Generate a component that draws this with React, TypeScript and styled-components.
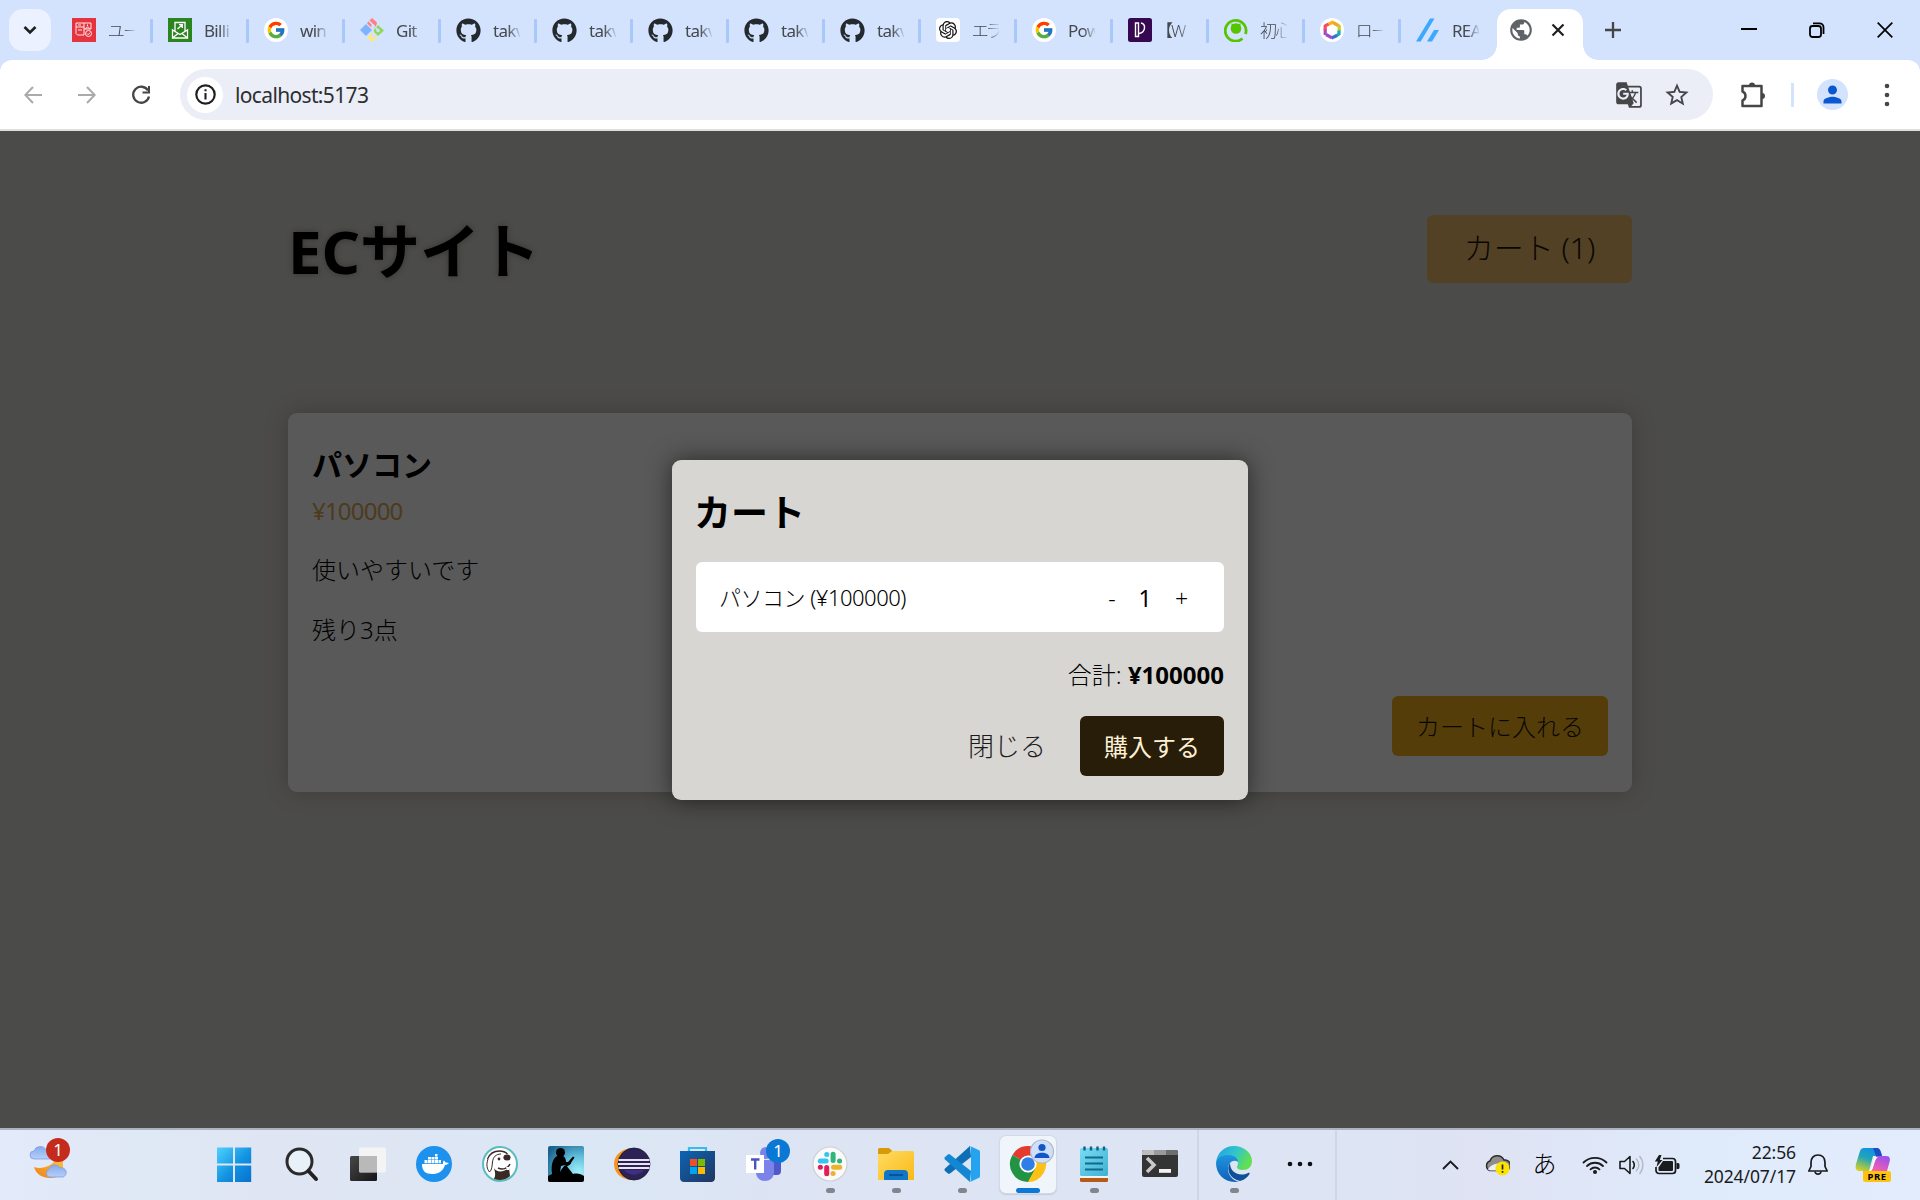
import React from "react";
import styled, { createGlobalStyle, css } from "styled-components";
import { FaGithub } from "react-icons/fa";
import { FcGoogle } from "react-icons/fc";
import { SiOpenai } from "react-icons/si";
import { MdGTranslate, MdStarBorder, MdPublic, MdPerson } from "react-icons/md";

const latin = `"Noto Sans", "Open Sans", "Noto Sans CJK JP", sans-serif`;

const GlobalStyle = createGlobalStyle`
  *, *::before, *::after { box-sizing: border-box; }
  body { margin: 0; overflow: hidden; font-family: ${latin}; color: #000; }
  svg { display: block; flex: none; }
  button { border: 0; padding: 0; background: none; font: inherit; color: inherit; letter-spacing: inherit; }
`;

const Window = styled.div`
  width: 1920px;
  height: 1200px;
  display: flex;
  flex-direction: column;
  background: #d3e2fd;
`;

/* ---------- tab strip ---------- */

const TabStrip = styled.div`
  height: 60px;
  flex: none;
  display: flex;
  padding-left: 9px;
`;

const TabSearch = styled.button`
  width: 42px;
  height: 42px;
  margin: 9px 6px 0 0;
  border-radius: 14px;
  background: #ebf1fe;
  display: grid;
  place-items: center;
`;

const Tab = styled.div<{ $last?: boolean }>`
  width: 96px;
  height: 60px;
  padding-left: 15px;
  display: flex;
  align-items: center;
  ${(p) =>
    !p.$last &&
    css`
      &::after {
        content: "";
        width: 3px;
        height: 24px;
        margin-left: auto;
        margin-top: 2px;
        border-radius: 1px;
        background: #a8c7fa;
      }
    `}
`;

const TabTitle = styled.span<{ $cjk?: boolean }>`
  width: 27px;
  margin-left: 12px;
  margin-top: 2px;
  overflow: hidden;
  white-space: nowrap;
  font-size: 17px;
  line-height: 24px;
  font-weight: ${(p) => (p.$cjk ? 300 : 400)};
  font-feature-settings: ${(p) => (p.$cjk ? '"palt"' : "normal")};
  letter-spacing: ${(p) => (p.$cjk ? "-1.4px" : "-0.7px")};
  color: #45484c;
  mask-image: linear-gradient(90deg, #000 55%, transparent 106%);
`;

const ActiveTab = styled.div`
  position: relative;
  width: 86px;
  height: 51px;
  margin-top: 9px;
  padding: 0 18px 9px 11px;
  border-radius: 14px 14px 0 0;
  background: #fff;
  display: flex;
  align-items: center;
  justify-content: space-between;
  &::before,
  &::after {
    content: "";
    position: absolute;
    bottom: 0;
    width: 15px;
    height: 15px;
  }
  &::before {
    left: -15px;
    background: radial-gradient(circle at 0 0, transparent 14.5px, #fff 15px);
  }
  &::after {
    right: -15px;
    background: radial-gradient(circle at 100% 0, transparent 14.5px, #fff 15px);
  }
`;

const NewTab = styled.button`
  width: 42px;
  height: 60px;
  margin-left: 9px;
  display: grid;
  place-items: center;
`;

const WindowControls = styled.div`
  margin-left: auto;
  margin-right: 1px;
  display: grid;
  grid-template-columns: repeat(3, 68px);
  height: 60px;
  place-items: center;
`;

/* ---------- toolbar ---------- */

const Toolbar = styled.div`
  height: 71px;
  flex: none;
  display: flex;
  align-items: center;
  padding: 0 10px 0 12px;
  background: #fff;
  border-bottom: 2px solid #dedede;
  border-radius: 12px 12px 0 0;
`;

const NavButton = styled.button<{ $w: number; $ml?: number }>`
  flex: none;
  width: ${(p) => p.$w}px;
  margin-left: ${(p) => p.$ml ?? 0}px;
  height: 48px;
  display: grid;
  place-items: center;
`;

const Omnibox = styled.div`
  flex: none;
  width: 1533px;
  height: 51px;
  margin-left: 18px;
  padding: 0 22px 0 7px;
  border-radius: 26px;
  background: #ebeef7;
  display: flex;
  align-items: center;
`;

const SiteInfo = styled.span`
  width: 36px;
  height: 36px;
  border-radius: 50%;
  background: #fff;
  display: grid;
  place-items: center;
`;

const Address = styled.span`
  margin-left: 12px;
  flex: 1;
  font-size: 21px;
  line-height: 30px;
  letter-spacing: -0.65px;
  color: #2c2e31;
`;

const OmniboxIcons = styled.div`
  display: flex;
  gap: 20px;
  color: #444648;
`;

const ToolbarDivider = styled.span`
  flex: none;
  width: 3px;
  height: 24px;
  margin: 0 23px 0 10px;
  background: #d3e3fd;
`;

const Avatar = styled.span`
  flex: none;
  width: 31px;
  height: 31px;
  border-radius: 50%;
  background: #d3e3fd;
  color: #0b57d0;
  display: grid;
  place-items: center;
`;

/* ---------- shop page ---------- */

const Page = styled.main`
  position: relative;
  flex: 1;
  background: #d8d6d2;
`;

const Shop = styled.div`
  width: 1344px;
  margin: 0 auto;
  padding-top: 84px;
`;

const ShopHeader = styled.header`
  display: flex;
  justify-content: space-between;
  align-items: flex-start;
  height: 198px;
`;

const SiteTitle = styled.h1`
  margin: 0;
  font-size: 60px;
  line-height: 72px;
  letter-spacing: 0;
  font-weight: 700;
  text-shadow: 0 0 6px rgba(0, 0, 0, 0.3);
`;

const OpenCart = styled.button`
  width: 205px;
  height: 68px;
  border-radius: 6px;
  background: #edba6a;
  font-size: 30px;
  line-height: 40px;
  padding: 0 0 2px;
  font-weight: 300;
  color: #1c1408;
`;

const Product = styled.article`
  height: 379px;
  padding: 32px 24px 36px;
  border-radius: 9px;
  background: #fff;
  box-shadow: 0 0 24px rgba(0, 0, 0, 0.2);
  display: flex;
  flex-direction: column;
`;

const ProductName = styled.h2`
  margin: 0;
  font-size: 30px;
  line-height: 40px;
  font-weight: 700;
`;

const Price = styled.p`
  margin: 8px 0 0;
  font-size: 24px;
  line-height: 36px;
  letter-spacing: -0.8px;
  color: #dba75a;
`;

const Note = styled.p<{ $first?: boolean }>`
  margin: ${(p) => (p.$first ? 23 : 24)}px 0 0;
  font-size: 24px;
  line-height: 36px;
  font-weight: 300;
`;

const AddButton = styled.button`
  width: 216px;
  height: 60px;
  margin: auto 0 0 auto;
  padding-bottom: 2px;
  border-radius: 6px;
  background: #f0ae1a;
  font-size: 24px;
  font-weight: 300;
  color: #1c1408;
`;

const Overlay = styled.div`
  position: absolute;
  inset: 0;
  display: grid;
  place-items: center;
  background: rgba(0, 0, 0, 0.65);
`;

const Modal = styled.section`
  width: 576px;
  height: 340px;
  border-radius: 9px;
  padding: 24px;
  background: #d8d6d2;
  box-shadow: 0 0 24px rgba(0, 0, 0, 0.55);
  display: flex;
  flex-direction: column;
`;

const ModalTitle = styled.h2`
  margin: 5px 0 25px -2px;
  font-size: 37px;
  line-height: 48px;
  font-weight: 700;
`;

const CartItem = styled.div`
  height: 70px;
  padding: 0 24px;
  border-radius: 6px;
  background: #fff;
  display: flex;
  align-items: center;
  justify-content: space-between;
  font-size: 22px;
  line-height: 34px;
  font-weight: 300;
`;

const ItemName = styled.span`
  margin-left: -1px;
  letter-spacing: -0.5px;
`;

const Quantity = styled.div`
  display: grid;
  grid-template-columns: 30px 36px 37px;
  place-items: center;
  font-size: 23px;
  font-weight: 400;
  padding-top: 2px;
`;

const Step = styled.button`
  font-size: 23px;
  font-weight: 300;
`;

const Total = styled.p`
  margin: 25px 0 0;
  text-align: right;
  font-size: 24px;
  line-height: 36px;
  font-weight: 300;
  strong {
    font-weight: 700;
    letter-spacing: 0;
  }
`;

const Actions = styled.div`
  margin-top: 23px;
  display: flex;
  justify-content: flex-end;
`;

const CloseButton = styled.button`
  width: 146px;
  height: 60px;
  padding-bottom: 2px;
  font-size: 26px;
  font-weight: 300;
  color: #1b1b1b;
`;

const BuyButton = styled.button`
  width: 144px;
  height: 60px;
  border-radius: 6px;
  background: #271d08;
  color: #fdf0d6;
  font-size: 24px;
`;

/* ---------- taskbar ---------- */

const Taskbar = styled.footer`
  height: 72px;
  flex: none;
  display: flex;
  border-top: 2px solid #acb3c0;
  background: linear-gradient(90deg, #e3eafa 0%, #dfe8f5 8%, #e0e5f3 14%, #dbe7f5 30%, #dde4f3 42%, #dde4f3 72%, #dfe3f4 77%, #dfeafa 88%, #e2ecfc 100%);
`;

const Weather = styled.div`
  position: relative;
  width: 203px;
  padding: 11px 0 0 26px;
`;

const Badge = styled.span<{ $x: number; $y: number; $bg: string }>`
  position: absolute;
  left: ${(p) => p.$x}px;
  top: ${(p) => p.$y}px;
  width: 24px;
  height: 24px;
  border-radius: 50%;
  background: ${(p) => p.$bg};
  color: #fff;
  font-size: 17px;
  line-height: 24px;
  text-align: center;
`;

const AppCell = styled.div<{ $active?: boolean }>`
  position: relative;
  width: ${(p) => (p.$active ? 56 : 66)}px;
  height: ${(p) => (p.$active ? 57 : 70)}px;
  margin: ${(p) => (p.$active ? "6px 5px 0" : "0")};
  padding-top: ${(p) => (p.$active ? 10 : 16)}px;
  display: flex;
  flex: none;
  flex-direction: column;
  align-items: center;
  gap: 6px;
  ${(p) =>
    p.$active &&
    css`
      background: #f0f4fb;
      border-radius: 6px;
      box-shadow: 0 0 0 1px #d3d9e7, 0 1px 1px 1px #c5ccdb;
    `}
`;

const Running = styled.span<{ $active?: boolean }>`
  width: ${(p) => (p.$active ? 24 : 9)}px;
  height: 5px;
  border-radius: 3px;
  background: ${(p) => (p.$active ? "#0a78d4" : "#81858d")};
`;

const RecentGroup = styled.div`
  display: flex;
  width: 140px;
  margin-left: 4px;
  padding-left: 2px;
  border-left: 2px solid #d0d6e6;
  border-right: 2px solid #d0d6e6;
`;

const Tray = styled.div`
  margin-left: 89px;
  display: flex;
  align-items: center;
`;

const TrayCell = styled.div<{ $w: number; $ml?: number }>`
  width: ${(p) => p.$w}px;
  margin-left: ${(p) => p.$ml ?? 0}px;
  display: grid;
  place-items: center;
`;

const InputMode = styled.span`
  font-size: 24px;
  line-height: 30px;
  font-weight: 300;
  margin-top: -2px;
`;

const Clock = styled.div`
  width: 111px;
  margin-top: -3px;
  text-align: right;
  font-size: 17.5px;
  line-height: 24px;
  letter-spacing: -0.1px;
  color: #1a1b1d;
  white-space: nowrap;
`;

/* ---------- favicons ---------- */

const Fav = (p: { children: React.ReactNode }) => (
  <svg width="24" height="24" viewBox="0 0 24 24">{p.children}</svg>
);

const UserFav = () => (
  <Fav>
    <rect width="24" height="24" fill="#e5343d" />
    <g fill="none" stroke="#fff" strokeWidth="0.900">
      <path d="M4 5h8v12H5.500L4 15.500zM4 9h8M6 12h4M6 7h3" />
      <path d="M12 5h7v6h-7M15.500 6.500v1.500M13.800 11c0-2.500 3.600-2.500 3.600 0" />
      <circle cx="16.500" cy="15.500" r="3" />
      <path d="M15 15.500l1.200 1.200 2-2.200" />
    </g>
  </Fav>
);

const BillingFav = () => (
  <Fav>
    <rect width="24" height="24" fill="#2c8420" />
    <g fill="none" stroke="#fff" strokeWidth="1.300">
      <path d="M4.500 12v8h15v-8l-7.500 4.500z" />
      <path d="M7 13V4.500h10V13M4.500 20l5.500-4.500M19.500 20L14 15.500" />
      <path d="M9.500 11l4.500-4M11 6.700h3.300V10" />
    </g>
  </Fav>
);

const GoogleFav = () => (
  <Fav>
    <circle cx="12" cy="12" r="12" fill="#fff" />
    <FcGoogle x={2} y={2} size={20} />
  </Fav>
);

const GitFav = () => (
  <Fav>
    <path d="M12 0l5 4.500-1.500 6L9.500 8 7 5z" fill="#ff8080" />
    <path d="M6 6l6 6-6 6-6-6z" fill="#80b3ff" />
    <path d="M18 7l6 5.500-6 5.500-5-5z" fill="#8fd858" />
    <path d="M12 14.500l5 5-5 4.500-5-4.500z" fill="#ffe680" />
    <path d="M9 3l9 9M13 7v12" stroke="#d3e2fd" strokeWidth="1.500" fill="none" />
    <circle cx="13" cy="8" r="1.700" fill="#d3e2fd" />
    <circle cx="18" cy="12.500" r="1.700" fill="#d3e2fd" />
    <circle cx="13" cy="18" r="1.700" fill="#d3e2fd" />
  </Fav>
);

const ChatFav = () => (
  <Fav>
    <rect width="24" height="24" rx="4" fill="#fff" />
    <SiOpenai x={3} y={3} size={18} color="#111" />
  </Fav>
);

const ProgateFav = () => (
  <Fav>
    <rect width="24" height="24" rx="2.500" fill="#36084f" />
    <path d="M7.500 15.500V5h3v13.500h-3v-3M13 5c5 1 5 9-2 10.500" fill="none" stroke="#fff" strokeWidth="1.400" />
  </Fav>
);

const QiitaFav = () => (
  <Fav>
    <path d="M18.500 20.500A10.400 10.400 0 1 1 21.500 16" fill="none" stroke="#55c500" strokeWidth="2.800" />
    <circle cx="12" cy="10.500" r="5.300" fill="#55c500" />
    <path d="M7.500 8.500V5.500l3 1M16.500 8.500V5.500l-3 1" fill="#55c500" />
  </Fav>
);

const HexFav = () => (
  <Fav>
    <circle cx="12" cy="12" r="12" fill="#fff" />
    <g fill="none" strokeWidth="3.200">
      <path d="M8 6.500L13.500 3.800" stroke="#fbb01e" />
      <path d="M13 4.500l6 3.500" stroke="#f5a524" />
      <path d="M19.200 7v6" stroke="#c3cf21" />
      <path d="M19 12.500v3.500l-3 2" stroke="#1ba9b5" />
      <path d="M17 17.500L11.500 20" stroke="#3d6fd1" />
      <path d="M12 19.800L6 16.500" stroke="#9b4dca" />
      <path d="M5.200 17v-6" stroke="#b044c0" />
      <path d="M5.200 12V8L8.500 6" stroke="#f04e5e" />
    </g>
  </Fav>
);

const ZennFav = () => (
  <Fav>
    <path d="M0 23.500h4.700L18.500.500h-4.500z" fill="#3ea8ff" />
    <path d="M11 23.500h5L23 12h-5z" fill="#3ea8ff" />
  </Fav>
);

const GithubFav = () => <FaGithub size={25} color="#24292e" />;

/* ---------- taskbar icons ---------- */

const Ico = (p: { children: React.ReactNode }) => (
  <svg width="36" height="36" viewBox="0 0 36 36" overflow="visible">
    {p.children}
  </svg>
);

const WeatherIcon = () => (
  <svg width="44" height="44" viewBox="0 0 44 44">
    <defs>
      <linearGradient id="moon" x1="1" y1="0" x2="0" y2="1">
        <stop offset="0" stopColor="#f6c344" />
        <stop offset="1" stopColor="#f07f1a" />
      </linearGradient>
      <linearGradient id="cloud" x1="0" y1="0" x2="0" y2="1">
        <stop offset="0" stopColor="#86a9ec" />
        <stop offset="1" stopColor="#b4cff8" />
      </linearGradient>
    </defs>
    <path d="M8 26c8 3 18-1 22-8h7v8c0 8-6 11-13 11-8 0-14-4-16-11z" fill="url(#moon)" />
    <path d="M8 18a4 4 0 0 1 0-8 6.500 6.500 0 0 1 12-1 5 5 0 0 1 4 9z" fill="url(#cloud)" stroke="#7ba0e4" strokeWidth=".8" />
    <path d="M23 36a4 4 0 0 1 0-7.500 6 6 0 0 1 11-1.500 4.500 4.500 0 0 1 3 9z" fill="url(#cloud)" stroke="#7ba0e4" strokeWidth=".8" />
  </svg>
);

const WindowsIcon = () => (
  <Ico>
    <defs>
      <linearGradient id="win" x1="0" y1="0" x2="1" y2="1">
        <stop offset="0" stopColor="#4fd2ff" />
        <stop offset=".55" stopColor="#1292e0" />
        <stop offset="1" stopColor="#0672cf" />
      </linearGradient>
    </defs>
    <path d="M0 1.500h16v16h-16zM18 1.500h16.200v16H18zM0 19.500h16v16.500H0zM18 19.500h16.200v16.500H18z" transform="translate(-1 0)" fill="url(#win)" />
  </Ico>
);

const SearchIcon = () => (
  <Ico>
    <circle cx="15.500" cy="15.500" r="12.500" fill="#e8f0f8" stroke="#2b2b2b" strokeWidth="3" />
    <path d="M24.500 25l7.500 8" stroke="#222" strokeWidth="4" strokeLinecap="round" />
  </Ico>
);

const TaskViewIcon = () => (
  <Ico>
    <defs>
      <linearGradient id="tv" x1="0" y1="0" x2="1" y2="1">
        <stop offset="0" stopColor="#474747" />
        <stop offset="1" stopColor="#161616" />
      </linearGradient>
    </defs>
    <rect x="0" y="10" width="27" height="25" rx="1.500" fill="url(#tv)" />
    <rect x="9" y="1.500" width="27" height="25" rx="1.500" fill="#f4f4f4" />
    <rect x="9" y="10" width="18" height="16" fill="#b9b9b9" />
  </Ico>
);

const DockerIcon = () => (
  <Ico>
    <circle cx="18" cy="18" r="18" fill="#1d91ee" />
    <path d="M6 18h21c0-1.500 0-2.500.800-3.500 1 .500 1.500 1.200 1.700 2 1.200-.200 2.300 0 3.300.600-.800 1.300-2 1.900-3.800 1.800C27 25.500 22 28 16 28 9.500 28 6 25 6 18z" fill="#fff" />
    <path d="M8.500 14h3v3.200h-3zM12 14h3v3.200h-3zM15.500 14h3v3.200h-3zM19 14h3v3.200h-3zM22.500 14h2.500v3.200h-2.500zM12 11h3v2.500h-3zM15.500 11h3v2.500h-3zM19 11h3v2.500h-3zM19 8h2.500v2.500H19z" fill="#fff" />
  </Ico>
);

const BeaverIcon = () => (
  <Ico>
    <circle cx="18" cy="18" r="17" fill="#fff" stroke="#59bcc0" strokeWidth="2" />
    <path d="M12 33c2-4 1-7 0-11 2 4 9 5 15 0l1 8c-4 4-10 5-16 3z" fill="#3a2a26" />
    <path d="M5.500 13c2-5 6-8 12-8 4 0 6 1 8 3" fill="none" stroke="#3a2a26" strokeWidth="1.300" />
    <path d="M6 13c-2 6-1 10 1.500 13 2.500-2 2.500-6 3-10 .500-5 3.500-8 8.500-8" fill="none" stroke="#3a2a26" strokeWidth="1" />
    <ellipse cx="25" cy="11.500" rx="3.600" ry="3" fill="#3a2a26" />
    <circle cx="17" cy="13" r="1.400" fill="#3a2a26" />
    <path d="M16 22c4 2 10 1 12-4" fill="none" stroke="#3a2a26" strokeWidth="1.400" />
    <path d="M24 21h3v3h-2z" fill="#fff" />
  </Ico>
);

const KindleIcon = () => (
  <Ico>
    <defs>
      <radialGradient id="kin" cx=".85" cy=".75" r="1">
        <stop offset="0" stopColor="#a4f3fb" />
        <stop offset=".5" stopColor="#5cb9d8" />
        <stop offset="1" stopColor="#1a628c" />
      </radialGradient>
    </defs>
    <rect width="36" height="36" rx="2" fill="url(#kin)" />
    <circle cx="12.500" cy="6.500" r="4.500" fill="#000" />
    <path d="M9 10c-5 3-6 10-5 18l-4 2v4a2 2 0 0 0 2 2h32a2 2 0 0 0 2-2v-4c-3-2-6-3-11-2l-7-9-6 7 1-6 4-1 6-1-1-2-4 0c0-4-2-7-7-7z" fill="#000" />
    <path d="M17 19l4-4 4-4.500 1.500 1-5 7.500-3 1.500z" fill="#000" />
    <path d="M13 24l4-5 4 8h-9z" fill="#000" />
  </Ico>
);

const EclipseIcon = () => (
  <Ico>
    <path d="M18 2C6 3 0 10 0 18s6 15 17 16C8 29 5 24 5 18S9 6 18 2z" fill="#f7941e" />
    <circle cx="20" cy="18" r="16" fill="#2c2255" stroke="#18132f" strokeWidth=".8" />
    <path d="M10 24a11 8 0 0 0 20 0z" fill="#3f2f80" />
    <path d="M4.500 14h31M4 18h32M4.500 22h31" stroke="#e8e4f2" strokeWidth="2" />
  </Ico>
);

const StoreIcon = () => (
  <Ico>
    <defs>
      <linearGradient id="store" x1="0" y1="0" x2="1" y2="1">
        <stop offset="0" stopColor="#0b65b5" />
        <stop offset="1" stopColor="#22355f" />
      </linearGradient>
    </defs>
    <path d="M9 8V2h17v6" fill="none" stroke="#35bdf0" strokeWidth="2.200" />
    <path d="M0 5h35v26.500a4 4 0 0 1-4 4.500h-27a4 4 0 0 1-4-4.500z" fill="url(#store)" />
    <rect x="10" y="13" width="7" height="7" fill="#f25022" />
    <rect x="18" y="13" width="7" height="7" fill="#7fba00" />
    <rect x="10" y="21" width="7" height="7" fill="#00a4ef" />
    <rect x="18" y="21" width="7" height="7" fill="#ffb900" />
  </Ico>
);

const TeamsIcon = () => (
  <Ico>
    <circle cx="20" cy="7" r="6" fill="#7b83eb" />
    <rect x="24" y="13" width="11" height="16" rx="4" fill="#5059c9" />
    <path d="M10 14h18v12c0 12-18 12-18 0z" fill="#7b83eb" />
    <rect x="0" y="9" width="18" height="18" fill="#fff" />
    <path d="M5 13.500h8.500M9.200 13.500v10" stroke="#4b53bc" strokeWidth="2.400" />
  </Ico>
);

const SlackIcon = () => (
  <Ico>
    <circle cx="18" cy="18" r="17" fill="#fafafa" stroke="#cfd0d6" strokeWidth="1.200" />
    <g strokeWidth="5" strokeLinecap="round">
      <path d="M8.300 14.900h5.800M14.700 8.500h.100" stroke="#36c5f0" />
      <path d="M21.100 8.300v6.200M27.500 14.900h.100" stroke="#2eb67d" />
      <path d="M27.700 21.300h-6.200M21.100 27.600h-.100" stroke="#ecb22e" />
      <path d="M14.700 21.500v6.200M8.300 21.300h.100" stroke="#e01e5a" />
    </g>
  </Ico>
);

const ExplorerIcon = () => (
  <Ico>
    <defs>
      <linearGradient id="fold" x1="0" y1="0" x2="1" y2="1">
        <stop offset="0" stopColor="#ffdc63" />
        <stop offset="1" stopColor="#f9b916" />
      </linearGradient>
    </defs>
    <path d="M0 3.500a1.500 1.500 0 0 1 1.500-1.500H11l4 3.500L11 9H0z" fill="#d99a08" />
    <path d="M0 8h10l4-3h20.500A1.500 1.500 0 0 1 36 6.500V34H0z" fill="url(#fold)" />
    <path d="M6 34V28a4 4 0 0 1 4-4h16a4 4 0 0 1 4 4v6z" fill="#0f76c8" />
    <path d="M11 29h14" stroke="#0b4f90" strokeWidth="1.800" />
  </Ico>
);

const CodeIcon = () => (
  <Ico>
    <path d="M26 0L1 22.500c-.800 1-.700 1.700 0 2.400l3 2.500c.700.400 1.300.400 2 0L27 11z" fill="#0d6fb5" />
    <path d="M26 36L1 13.500c-.800-1-.700-1.700 0-2.400l3-2.500c.700-.400 1.300-.400 2 0L27 25z" fill="#1387d3" />
    <path d="M26 0l9 4.300c.700.400 1 .800 1 1.700v24c0 .900-.300 1.300-1 1.700L26 36c.700-.700 1-1.500 1-2.500v-31C27 1.500 26.700.700 26 0z" fill="#26a3ee" />
  </Ico>
);

const ChromeIcon = () => (
  <Ico>
    <path d="M18 18L2.400 9A18 18 0 0 1 33.600 9z" fill="#e33b2e" />
    <path d="M18 18L33.600 9A18 18 0 0 1 18 36z" fill="#fbc116" />
    <path d="M18 18v18A18 18 0 0 1 2.400 9z" fill="#229342" />
    <path d="M18 9.500h15.800L34 10 25.500 22.500z" fill="#fbc116" />
    <path d="M25.500 22.200L18 36l-3-5 4-5z" fill="#229342" />
    <path d="M25.800 22.500L18 36h2l8-14z" fill="#fbc116" />
    <circle cx="18" cy="18" r="8.600" fill="#fff" />
    <circle cx="18" cy="18" r="6.800" fill="#2f7de9" />
    <circle cx="32" cy="5.500" r="11.500" fill="#cfdffb" stroke="#b0b8c8" strokeWidth="1.200" />
    <circle cx="32" cy="1.500" r="3.600" fill="#1155c8" />
    <path d="M24.500 12c0-7 15-7 15 0z" fill="#1155c8" />
  </Ico>
);

const NotepadIcon = () => (
  <Ico>
    <defs>
      <linearGradient id="note" x1="0" y1="0" x2="1" y2="1">
        <stop offset="0" stopColor="#7adcf3" />
        <stop offset="1" stopColor="#3fb0d2" />
      </linearGradient>
    </defs>
    <rect x="4" y="30" width="28" height="6" rx="1.500" fill="#b85a17" />
    <rect x="4" y="29" width="28" height="3" fill="#f3f3f3" />
    <rect x="4" y="2" width="28" height="28" rx="1.500" fill="url(#note)" />
    <path d="M8.500.500v4M15 .500v4M21.500.500v4M28 .500v4" stroke="#106084" strokeWidth="2.400" />
    <path d="M9 11.500h18M9 17.500h18M9 23.500h18" stroke="#106a8e" strokeWidth="2" />
  </Ico>
);

const TerminalIcon = () => (
  <Ico>
    <rect x="0" y="4" width="36" height="27" rx="2" fill="#343434" />
    <path d="M0 9V6a2 2 0 0 1 2-2h10v5z" fill="#bdbdbd" />
    <path d="M12 4h12v5H12z" fill="#9a9a9a" />
    <path d="M24 4h10a2 2 0 0 1 2 2v3H24z" fill="#6d6d6d" />
    <path d="M5 12l7 7-7 7" fill="none" stroke="#c9c9c9" strokeWidth="3.500" />
    <rect x="17" y="23" width="12" height="3.800" fill="#f2f2f2" />
  </Ico>
);

const EdgeIcon = () => (
  <Ico>
    <defs>
      <linearGradient id="edA" x1="0" y1="0" x2="1" y2=".4">
        <stop offset="0" stopColor="#1f9fe0" />
        <stop offset=".55" stopColor="#30c4cf" />
        <stop offset="1" stopColor="#62e052" />
      </linearGradient>
      <linearGradient id="edB" x1="0" y1="0" x2="0" y2="1">
        <stop offset="0" stopColor="#1f95e0" />
        <stop offset="1" stopColor="#0f60b8" />
      </linearGradient>
    </defs>
    <path d="M0 17C1 6 9 0 18 0c10 0 18 7 18 15 0 6-4 9-9 9-4 0-6-1-6-3 0-1 1-1.500 1-4 0-3-3-5-7-5C8 12 1 13 0 17z" fill="url(#edA)" />
    <path d="M0 17c1-6 7-8 12-8 6 0 10 3 10 7-4-3-10 0-10 7 0 6 5 12 11 12.500C10 38 0 29 0 17z" fill="url(#edB)" />
    <path d="M14 17c-4 5-1 16 10 18 4-1 8-4 9.500-7 .500-1-.500-1.500-1.500-1-8 4-18 0-18-10z" fill="#0e4f98" />
  </Ico>
);

const DotsIcon = () => (
  <Ico>
    <circle cx="8" cy="18" r="2.300" fill="#111" />
    <circle cx="18" cy="18" r="2.300" fill="#111" />
    <circle cx="28" cy="18" r="2.300" fill="#111" />
  </Ico>
);

/* ---------- tray icons ---------- */

const CloudAlert = () => (
  <svg width="26" height="22" viewBox="0 0 26 22">
    <path d="M6 16.500a5 5 0 0 1 0-9.500 7.500 7.500 0 0 1 14-1 5 5 0 0 1 2 10.500z" fill="#8e8e8e" stroke="#2c2c2c" strokeWidth="1.500" />
    <path d="M4 15.500c2-4 8-7 13-5l-4 6H6z" fill="#eceff4" />
    <circle cx="18.500" cy="14.500" r="7" fill="#fde300" />
    <path d="M18.500 10.500v5M18.500 17v1.800" stroke="#222" strokeWidth="1.700" />
  </svg>
);

const WifiIcon = () => (
  <svg width="26" height="20" viewBox="0 0 26 20">
    <g fill="none" stroke="#1a1b1d" strokeWidth="1.800" strokeLinecap="round">
      <path d="M1.500 7.500a16.500 16.500 0 0 1 23 0M5 11a11.500 11.500 0 0 1 16 0M8.500 14.300a6.500 6.500 0 0 1 9 0" />
    </g>
    <circle cx="13" cy="17" r="2" fill="#1a1b1d" />
  </svg>
);

const SpeakerIcon = () => (
  <svg width="26" height="22" viewBox="0 0 26 22">
    <path d="M2 7.500h4.500L12 2.500v17l-5.500-5H2z" fill="none" stroke="#1a1b1d" strokeWidth="1.600" strokeLinejoin="round" />
    <path d="M15 7.500c1.500 2 1.500 5 0 7" fill="none" stroke="#1a1b1d" strokeWidth="1.600" strokeLinecap="round" />
    <path d="M18 4.500c3.500 4 3.500 9 0 13M21.500 2c4.500 5.500 4.500 12.500 0 18" fill="none" stroke="#b4bbc6" strokeWidth="1.400" />
  </svg>
);

const BatteryIcon = () => (
  <svg width="26" height="20" viewBox="0 0 26 20">
    <path d="M9 3.500h9.500a3 3 0 0 1 3 3v9a3 3 0 0 1-3 3H5a3 3 0 0 1-3-3V12" fill="none" stroke="#1a1b1d" strokeWidth="1.700" />
    <path d="M9 6h9a1 1 0 0 1 1 1v8a1 1 0 0 1-1 1H5.500a1 1 0 0 1-1-1v-2.500z" fill="#1a1b1d" />
    <path d="M22.500 8h1.500a1.500 1.500 0 0 1 1.500 1.500v3a1.500 1.500 0 0 1-1.500 1.500h-1.500z" fill="#1a1b1d" />
    <path d="M5 0L.800 6.500h3L2.500 12 8.500 5H5.800L7.500 0z" fill="#1a1b1d" />
  </svg>
);

const BellIcon = () => (
  <svg width="22" height="24" viewBox="0 0 22 24">
    <path d="M11 2c-4.500 0-7 3.300-7 7.500v4L1.800 18h18.400L18 13.500v-4C18 5.300 15.500 2 11 2z" fill="none" stroke="#1a1b1d" strokeWidth="1.700" strokeLinejoin="round" />
    <path d="M8 18.500c.500 3.500 5.500 3.500 6 0" fill="none" stroke="#1a1b1d" strokeWidth="1.700" />
  </svg>
);

const PreTag = styled.span`
  position: absolute;
  left: 8px;
  top: 24px;
  width: 28px;
  height: 11px;
  border-radius: 2.5px;
  background: #ffc20e;
  font-size: 9.5px;
  line-height: 11px;
  font-weight: 700;
  letter-spacing: 0.5px;
  text-align: center;
`;

const CopilotBox = styled.div`
  position: relative;
  width: 36px;
  height: 36px;
  margin: -1px 0 0 19px;
`;

const CopilotIcon = () => (
  <svg width="36" height="36" viewBox="0 0 36 36">
    <defs>
      <linearGradient id="cpA" x1=".6" y1="0" x2=".2" y2="1">
        <stop offset="0" stopColor="#128fe2" />
        <stop offset=".45" stopColor="#22a6b8" />
        <stop offset="1" stopColor="#d8d020" />
      </linearGradient>
      <linearGradient id="cpB" x1=".8" y1="0" x2=".3" y2="1">
        <stop offset="0" stopColor="#9a4ff0" />
        <stop offset=".6" stopColor="#ee5fb0" />
        <stop offset="1" stopColor="#ff9355" />
      </linearGradient>
    </defs>
    <path d="M9 1h13c3 0 4 4 5 8h-9l-4 15H5c-4 0-5-2-4-7L5 4c.800-2 2-3 4-3z" fill="url(#cpA)" />
    <path d="M18 1h4c3 0 4 4 5 8h-6z" fill="#1a4fc4" />
    <path d="M21 9h10c4 0 4.500 3 3.500 6l-2.500 9-2 7H14c-3 0-5-2-6-7h6c2 0 3-2 3.500-4z" fill="url(#cpB)" />
    <path d="M20 10c-2 3-3 13-6 14h2c3-2 3-12 7-14z" fill="#fff" />
  </svg>
);

const tabs: { icon: React.ReactNode; title: string; cjk?: boolean }[] = [
  { icon: <UserFav />, title: "ユー", cjk: true },
  { icon: <BillingFav />, title: "Billi" },
  { icon: <GoogleFav />, title: "win" },
  { icon: <GitFav />, title: "Git" },
  ...Array.from({ length: 5 }, () => ({ icon: <GithubFav />, title: "takv" })),
  { icon: <ChatFav />, title: "エラ", cjk: true },
  { icon: <GoogleFav />, title: "Pow" },
  { icon: <ProgateFav />, title: "【W", cjk: true },
  { icon: <QiitaFav />, title: "初心", cjk: true },
  { icon: <HexFav />, title: "ロー", cjk: true },
  { icon: <ZennFav />, title: "REA" },
];

const apps: { icon: React.ReactNode; running?: boolean; active?: boolean; badge?: string }[] = [
  { icon: <WindowsIcon /> },
  { icon: <SearchIcon /> },
  { icon: <TaskViewIcon /> },
  { icon: <DockerIcon /> },
  { icon: <BeaverIcon /> },
  { icon: <KindleIcon /> },
  { icon: <EclipseIcon /> },
  { icon: <StoreIcon /> },
  { icon: <TeamsIcon />, badge: "1" },
  { icon: <SlackIcon />, running: true },
  { icon: <ExplorerIcon />, running: true },
  { icon: <CodeIcon />, running: true },
  { icon: <ChromeIcon />, active: true },
  { icon: <NotepadIcon />, running: true },
  { icon: <TerminalIcon /> },
];

function BrowserTabs() {
  return (
    <TabStrip>
      <TabSearch>
        <svg width="14" height="10" viewBox="0 0 14 10">
          <path d="M1.500 2L7 7.500 12.500 2" fill="none" stroke="#1f1f1f" strokeWidth="2.600" />
        </svg>
      </TabSearch>
      {tabs.map((t, i) => (
        <Tab key={i} $last={i === tabs.length - 1}>
          {t.icon}
          <TabTitle $cjk={t.cjk}>{t.title}</TabTitle>
        </Tab>
      ))}
      <ActiveTab>
        <MdPublic size={26} color="#5f6368" />
        <svg width="14" height="14" viewBox="0 0 14 14">
          <path d="M1.500 1.500l11 11M12.500 1.500l-11 11" stroke="#1f1f1f" strokeWidth="2.200" />
        </svg>
      </ActiveTab>
      <NewTab>
        <svg width="16" height="16" viewBox="0 0 16 16">
          <path d="M8 0v16M0 8h16" stroke="#444746" strokeWidth="2.300" />
        </svg>
      </NewTab>
      <WindowControls>
        <svg width="16" height="16" viewBox="0 0 16 16">
          <path d="M0 7h16" stroke="#000" strokeWidth="2" />
        </svg>
        <svg width="16" height="16" viewBox="0 0 16 16" overflow="visible">
          <rect x="1" y="4" width="11" height="11" rx="2.500" fill="none" stroke="#000" strokeWidth="1.800" />
          <path d="M4 1.300h6.500a4 4 0 0 1 4 4V12" fill="none" stroke="#000" strokeWidth="1.800" />
        </svg>
        <svg width="16" height="16" viewBox="0 0 16 16">
          <path d="M.7.7l14.600 14.600M15.300.7L.7 15.300" stroke="#000" strokeWidth="1.700" />
        </svg>
      </WindowControls>
    </TabStrip>
  );
}

function BrowserToolbar() {
  return (
    <Toolbar>
      <NavButton $w={42}>
        <svg width="18" height="18" viewBox="0 0 18 18">
          <path d="M18 9H1.500M9 1L1.300 9 9 17" fill="none" stroke="#a9aaac" strokeWidth="2" />
        </svg>
      </NavButton>
      <NavButton $w={66}>
        <svg width="18" height="18" viewBox="0 0 18 18">
          <path d="M0 9h16.500M9 1l7.700 8L9 17" fill="none" stroke="#a9aaac" strokeWidth="2" />
        </svg>
      </NavButton>
      <NavButton $w={42}>
        <svg width="20" height="20" viewBox="0 0 20 20">
          <path d="M17 5.500A8 8 0 1 0 18 11.500" fill="none" stroke="#444746" strokeWidth="2.300" />
          <path d="M19 1v7.500h-7.500V6.500H17V1z" fill="#444746" />
        </svg>
      </NavButton>
      <Omnibox>
        <SiteInfo>
          <svg width="21" height="21" viewBox="0 0 21 21">
            <circle cx="10.500" cy="10.500" r="9.200" fill="none" stroke="#1f1f1f" strokeWidth="2.200" />
            <path d="M10.500 9v6.500M10.500 5.300v2" stroke="#1f1f1f" strokeWidth="2.100" />
          </svg>
        </SiteInfo>
        <Address>localhost:5173</Address>
        <OmniboxIcons>
          <MdGTranslate size={28} />
          <MdStarBorder size={28} />
        </OmniboxIcons>
      </Omnibox>
      <NavButton $w={56} $ml={12}>
        <svg width="24" height="26" viewBox="0 0 24 26" overflow="visible">
          <path d="M1.500 4h19v20h-19v-5.500c4-1.500 4-7.500 0-9z" fill="none" stroke="#444746" strokeWidth="2.500" strokeLinejoin="round" />
          <path d="M8 3.500a3 3 0 0 1 6 0zM21 11a3 3 0 0 1 0 6z" fill="#444746" />
        </svg>
      </NavButton>
      <ToolbarDivider />
      <Avatar>
        <MdPerson size={27} />
      </Avatar>
      <NavButton $w={46} $ml={16}>
        <svg width="6" height="26" viewBox="0 0 6 26" fill="#444746">
          <circle cx="3" cy="4" r="2.300" />
          <circle cx="3" cy="13" r="2.300" />
          <circle cx="3" cy="22" r="2.300" />
        </svg>
      </NavButton>
    </Toolbar>
  );
}

function CartModal() {
  return (
    <Overlay>
      <Modal>
        <ModalTitle>カート</ModalTitle>
        <CartItem>
          <ItemName>パソコン (¥100000)</ItemName>
          <Quantity>
            <Step>-</Step>
            <span>1</span>
            <Step>+</Step>
          </Quantity>
        </CartItem>
        <Total>
          合計: <strong>¥100000</strong>
        </Total>
        <Actions>
          <CloseButton>閉じる</CloseButton>
          <BuyButton>購入する</BuyButton>
        </Actions>
      </Modal>
    </Overlay>
  );
}

function ShopPage() {
  return (
    <Page>
      <Shop>
        <ShopHeader>
          <SiteTitle>ECサイト</SiteTitle>
          <OpenCart>カート (1)</OpenCart>
        </ShopHeader>
        <Product>
          <ProductName>パソコン</ProductName>
          <Price>¥100000</Price>
          <Note $first>使いやすいです</Note>
          <Note>残り3点</Note>
          <AddButton>カートに入れる</AddButton>
        </Product>
      </Shop>
      <CartModal />
    </Page>
  );
}

function WindowsTaskbar() {
  return (
    <Taskbar>
      <Weather>
        <WeatherIcon />
        <Badge $x={46} $y={8} $bg="#c42b1c">1</Badge>
      </Weather>
      {apps.map((a, i) => (
        <AppCell key={i} $active={a.active}>
          {a.icon}
          {(a.running || a.active) && <Running $active={a.active} />}
          {a.badge && <Badge $x={35} $y={9} $bg="#0a78d4">{a.badge}</Badge>}
        </AppCell>
      ))}
      <RecentGroup>
        <AppCell>
          <EdgeIcon />
          <Running />
        </AppCell>
        <AppCell>
          <DotsIcon />
        </AppCell>
      </RecentGroup>
      <Tray>
        <TrayCell $w={48}>
          <svg width="17" height="10" viewBox="0 0 17 10">
            <path d="M1 9l7.500-7.500L16 9" fill="none" stroke="#1a1b1d" strokeWidth="1.900" />
          </svg>
        </TrayCell>
        <TrayCell $w={46}><CloudAlert /></TrayCell>
        <TrayCell $w={49}><InputMode>あ</InputMode></TrayCell>
        <TrayCell $w={36} $ml={8}><WifiIcon /></TrayCell>
        <TrayCell $w={36}><SpeakerIcon /></TrayCell>
        <TrayCell $w={36}><BatteryIcon /></TrayCell>
        <Clock>
          22:56
          <br />
          2024/07/17
        </Clock>
        <TrayCell $w={36} $ml={4}><BellIcon /></TrayCell>
        <CopilotBox>
          <CopilotIcon />
          <PreTag>PRE</PreTag>
        </CopilotBox>
      </Tray>
    </Taskbar>
  );
}

export default function App() {
  return (
    <Window>
      <GlobalStyle />
      <BrowserTabs />
      <BrowserToolbar />
      <ShopPage />
      <WindowsTaskbar />
    </Window>
  );
}
